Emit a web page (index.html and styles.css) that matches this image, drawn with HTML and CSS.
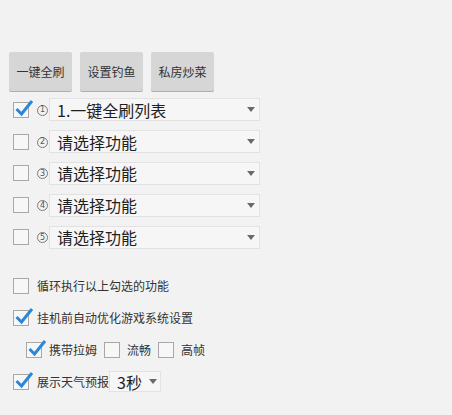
FILE: index.html
```html
<!DOCTYPE html>
<html lang="zh">
<head>
    <meta charset="UTF-8">
    <title>设置</title>
    <link rel="stylesheet" href="styles.css">
</head>
<body>
    <div class="toolbar">
        <button class="btn">一键全刷</button>
        <button class="btn">设置钓鱼</button>
        <button class="btn">私房炒菜</button>
    </div>

    <!-- 功能列表 -->
    <div class="list">
        <div class="row">
            <span class="box checked"><svg viewBox="0 0 20 20"><path d="M2.5 11 L7.5 16 L18 3"/></svg></span>
            <span class="num">1</span>
            <div class="select"><span>1.一键全刷列表</span><i class="arrow"></i></div>
        </div>
        <div class="row">
            <span class="box"></span>
            <span class="num">2</span>
            <div class="select"><span>请选择功能</span><i class="arrow"></i></div>
        </div>
        <div class="row">
            <span class="box"></span>
            <span class="num">3</span>
            <div class="select"><span>请选择功能</span><i class="arrow"></i></div>
        </div>
        <div class="row">
            <span class="box"></span>
            <span class="num">4</span>
            <div class="select"><span>请选择功能</span><i class="arrow"></i></div>
        </div>
        <div class="row">
            <span class="box"></span>
            <span class="num">5</span>
            <div class="select"><span>请选择功能</span><i class="arrow"></i></div>
        </div>
    </div>

    <div class="options">
        <div class="row">
            <span class="box"></span>
            <span class="label">循环执行以上勾选的功能</span>
        </div>
        <div class="row">
            <span class="box checked"><svg viewBox="0 0 20 20"><path d="M2.5 11 L7.5 16 L18 3"/></svg></span>
            <span class="label">挂机前自动优化游戏系统设置</span>
        </div>
        <div class="row sub">
            <span class="box checked"><svg viewBox="0 0 20 20"><path d="M2.5 11 L7.5 16 L18 3"/></svg></span>
            <span class="label">携带拉姆</span>
            <span class="box"></span>
            <span class="label">流畅</span>
            <span class="box"></span>
            <span class="label">高帧</span>
        </div>
        <div class="row">
            <span class="box checked"><svg viewBox="0 0 20 20"><path d="M2.5 11 L7.5 16 L18 3"/></svg></span>
            <span class="label">展示天气预报</span>
            <div class="select small"><span>3秒</span><i class="arrow"></i></div>
        </div>
    </div>
</body>
</html>
```

FILE: styles.css
```css
body {
    margin: 0;
    background: #f2f2f2;
    font-family: "Noto Sans CJK SC", "Noto Sans", sans-serif;
    color: #222;
}
.toolbar {
    display: flex;
    gap: 8px;
    padding: 52px 0 0 9px;
}
.btn {
    width: 63px;
    height: 39px;
    padding: 0;
    border: none;
    border-radius: 2px;
    background: #d6d6d6;
    box-shadow: 0 1px 0 #aeaeae;
    font-family: inherit;
    font-size: 12px;
    color: #333;
}
.list {
    margin-top: 3px;
}
.row {
    display: flex;
    align-items: center;
    height: 32px;
    padding-left: 13px;
}
.list .row {
    height: 31.8px;
}
.box {
    position: relative;
    width: 14px;
    height: 14px;
    border: 1px solid #a8a8a8;
    background: #f7f7f7;
    flex: none;
}
.box svg {
    position: absolute;
    left: 0;
    top: -5px;
    width: 20px;
    height: 20px;
    fill: none;
    stroke: #2b87d8;
    stroke-width: 3;
}
.num {
    display: flex;
    align-items: center;
    justify-content: center;
    box-sizing: border-box;
    width: 11px;
    height: 11px;
    margin: 1px 1px 0 8px;
    border: 1px solid #7a7a7a;
    border-radius: 50%;
    font-family: "DejaVu Sans", sans-serif;
    font-size: 8px;
    line-height: 1;
    color: #555;
}
.select {
    display: flex;
    align-items: center;
    justify-content: space-between;
    box-sizing: border-box;
    width: 211px;
    height: 23px;
    padding: 0 4px 0 7px;
    border: 1px solid #e2e2e2;
    background: #f6f6f6;
    font-size: 16px;
    color: #1e1e1e;
}
.arrow {
    width: 0;
    height: 0;
    border-left: 4px solid transparent;
    border-right: 4px solid transparent;
    border-top: 5px solid #6a6a6a;
}
.options {
    margin-top: 17px;
}
.label {
    margin-left: 8px;
    font-size: 12px;
    color: #333;
}
.sub {
    padding-left: 26px;
}
.sub .label {
    margin: 0 7px 0 7px;
}
.select.small {
    width: 52px;
    height: 21px;
    padding: 0 3px 0 7px;
    margin-left: 0;
}
```
